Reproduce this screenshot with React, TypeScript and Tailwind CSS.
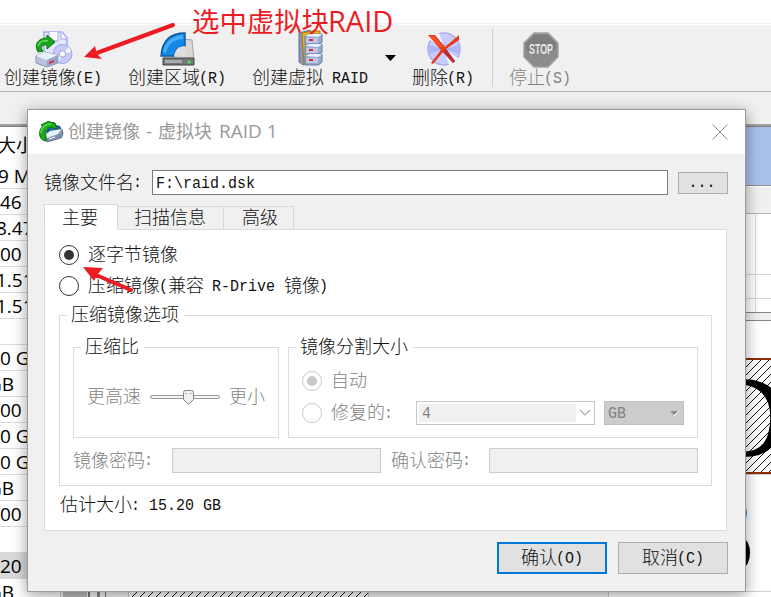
import type { ReactNode } from 'react';
import { clsx } from 'clsx';

const cjkFont = "font-['Noto_Sans_CJK_SC',sans-serif]";
const monoFont = "font-['Liberation_Mono','Noto_Sans_CJK_SC',monospace]";
const uiFont = "font-['Open_Sans','Noto_Sans_CJK_SC',sans-serif]";

/* Fixed-pitch label: Han characters take 18px, Latin ones 9px. */
function Label({ children, className }: { children: string; className?: string }) {
  const runs = children.split(/([\u4e00-\u9fff]+)/).filter(Boolean);
  return (
    <span className={clsx('inline-flex h-[18px] shrink-0 items-center whitespace-pre font-light', className)}>
      {runs.map((run, i) =>
        /[\u4e00-\u9fff]/.test(run) ? (
          <span key={i} className={clsx(cjkFont, '-mt-[4px] text-[18px] leading-[18px]')}>{run}</span>
        ) : (
          <span key={i} className={clsx(monoFont, '-ml-px mt-[3px] scale-y-115 text-[15px] leading-[18px] first:ml-0')}>{run}</span>
        ),
      )}
    </span>
  );
}

function CreateImageIcon() {
  return (
    <svg width="38" height="38" viewBox="0 0 38 38" className="block">
      <path d="M9 2h18l5 6v17H9z" fill="#e4e6ff" stroke="#aaa9f2" strokeWidth="1.6" />
      <path d="M14 2v9h9V2M26 2v7h6" fill="#fff" stroke="#b5b4f4" strokeWidth="1.3" />
      <circle cx="27.5" cy="24" r="9.5" fill="#c5cafa" stroke="#a3a2df" />
      <path d="M27 24 34 17a9 9 0 0 1 2 5zM27 24l-3 8a9 9 0 0 1-5-4z" fill="#effaff" />
      <circle cx="27.5" cy="24" r="3.2" fill="#fff" stroke="#9c9cd8" />
      <path d="m1 26 8-4 14 3v8l-11 4L1 33z" fill="#b9c3de" stroke="#8a96bb" />
      <path d="m1 26 8-4 14 3-11 5z" fill="#e8f0fa" />
      <path d="M12 30v7l11-4v-8z" fill="#97a5ce" />
      <path d="m14 32 5-2v2l-5 2z" fill="#e22c35" />
      <path d="M3 22C-2 13 5 8 12 8V5l8 7-8 7v-4c-5-1-7 3-4 6z" fill="#18a51d" stroke="#087b13" />
      <path d="M3 16c1-4 5-6 10-5" fill="none" stroke="#6bdc61" strokeWidth="1.5" />
    </svg>
  );
}

function CreateRegionIcon() {
  return (
    <svg width="36" height="36" viewBox="0 0 36 36" className="block">
      <path d="m24 7 8 1 2 20H4l2-6h18z" fill="#d8d8d8" stroke="#a7a7a7" />
      <path d="M3 26h31v7H3z" fill="#777" stroke="#444" />
      <path d="M5 28h17v3H5z" fill="#aaa" />
      <circle cx="29" cy="30" r="1.5" fill="#48f13c" />
      <path d="M1 24C2 10 9 1 25 1v13c-7 0-10 4-11 10z" fill="#1587e5" stroke="#1057a1" strokeWidth="1.4" />
      <path d="M3 20C5 10 11 4 23 3v4C14 7 8 12 6 21z" fill="#44aef8" />
      <path d="M14 24c1-6 4-10 11-10v10z" fill="#ddd" />
    </svg>
  );
}

function VirtualRaidIcon() {
  return (
    <svg width="28" height="37" viewBox="0 0 28 37" className="block">
      <path d="M2 3 13 0v32l-7 3-4-3z" fill="#8993bd" stroke="#69739c" />
      <path d="M5 3 16 1h7v33H7z" fill="#e9b71c" stroke="#a77d05" />
      {[4, 14, 24].map((y) => (
        <g key={y} transform={`translate(8 ${y})`}>
          <path d="m0 2 4-2h13v8l-4 3H0z" fill="#9da9d2" stroke="#6776a5" />
          <path d="m0 2 4-2h13l-4 3z" fill="#e8f2ff" />
          <path d="M1 4h12v5H1z" fill="#bbc8ea" />
          <path d="M4 5h4v2H4z" fill="#dd2631" />
        </g>
      ))}
    </svg>
  );
}

function DeleteIcon() {
  return (
    <svg width="36" height="36" viewBox="0 0 36 36" className="block">
      <circle cx="18" cy="18" r="16" fill="#c9ccfb" stroke="#aaaceb" strokeWidth="1.5" />
      <path d="M18 18 4 9a16 16 0 0 1 9-7zM18 18l14 9a16 16 0 0 1-9 7z" fill="#f5faff" />
      <path d="M18 18 33 14v9zM18 18 3 23v-9z" fill="#afb6f6" />
      <circle cx="18" cy="18" r="4" fill="#e8e9ff" stroke="#9798d6" />
      <path d="M2 4h7l10 12L33 4v5L20 18l9 12-2 2-10-11L7 33l-2-1 10-13z" fill="#e63918" />
      <path d="m3 5 5 0 9 11-3 0z" fill="#ff5429" />
      <path d="m20 18 9 12-2 2-10-11z" fill="#b92d38" />
    </svg>
  );
}

function StopIcon() {
  return (
    <svg width="36" height="36" viewBox="0 0 36 36" className="block">
      <path d="M11 1h14l10 10v14L25 35H11L1 25V11z" fill="#8b8b8b" stroke="#a3a3a3" strokeWidth="1.5" />
      <path d="M11 3h14l8 8v7H3v-7z" fill="#7d7d7d" />
      <text x="18" y="22" textAnchor="middle" textLength="24" lengthAdjust="spacingAndGlyphs" fontFamily="Liberation Sans, sans-serif" fontSize="14" fontWeight="700" fill="#e6e6e6">STOP</text>
    </svg>
  );
}

function DialogIcon() {
  return (
    <svg width="25" height="22" viewBox="0 0 25 22" className="block">
      <path d="m7 10 6-7 8 2 3 7-2 5H9z" fill="#124b91" />
      <path d="m10 8 5-4 6 3 1 5-12 2z" fill="#1c6cc3" />
      <path d="m6 14 5-4 12-2 1 5-2 4-14 4z" fill="#8495ac" stroke="#43546b" strokeWidth=".7" />
      <path d="m6 14 5-4 12-2-4 5-11 4z" fill="#e8f3fb" />
      <path d="m10 18 6-2" stroke="#fff" />
      <circle cx="20" cy="15" r="1" fill="#4d8de0" />
      <path d="M7 20C-1 19-1 9 4 5L2 4 9 .5l7 1.5 2 6-4-1c-5-2-9 3-7 8z" fill="#19a820" stroke="#06720d" />
      <path d="M2 12c0-5 4-9 10-9" fill="none" stroke="#63df43" strokeWidth="1.5" />
    </svg>
  );
}

function ToolButton({ icon, text, className, iconClass }: { icon: ReactNode; text: string; className?: string; iconClass?: string }) {
  return (
    <div className={clsx('flex shrink-0 flex-col items-start', className)}>
      <div className={clsx('flex h-[38px] items-start', iconClass)}>{icon}</div>
      <Label className="mt-px">{text}</Label>
    </div>
  );
}

function Radio({ checked, disabled }: { checked?: boolean; disabled?: boolean }) {
  return (
    <span className={clsx('flex size-5 shrink-0 items-center justify-center rounded-full border bg-white', disabled ? 'border-[#c8c8c8]' : 'border-[#333]')}>
      {checked && <span className={clsx('size-[10px] rounded-full', disabled ? 'bg-[#c8c8c8]' : 'bg-[#333]')} />}
    </span>
  );
}

function Group({ title, className, children }: { title: string; className?: string; children: ReactNode }) {
  return (
    <fieldset className={clsx('min-w-0 shrink-0 border border-[#dcdcdc]', className)}>
      <legend className="ml-[7px] flex h-[18px] pl-1 pr-[5px]">
        <Label>{title}</Label>
      </legend>
      {children}
    </fieldset>
  );
}

const sizes = [
  { text: '9 M', shift: '-ml-[2px]' },
  { text: '46 G', shift: 'ml-0' },
  { text: '8.47', shift: '-ml-[4px]' },
  { text: '00 G', shift: 'ml-0' },
  { text: '1.51', shift: '-ml-[4px]' },
  { text: '1.51', shift: '-ml-[4px]' },
  { text: '', shift: '' },
  { text: '0 G', shift: 'ml-0' },
  { text: 'GB', shift: '-ml-[12px]' },
  { text: '00 G', shift: 'ml-0' },
  { text: '0 G', shift: 'ml-0' },
  { text: '0 G', shift: 'ml-0' },
  { text: 'GB', shift: '-ml-[12px]' },
  { text: '00 G', shift: 'ml-0' },
  { text: '', shift: '' },
  { text: '20 G', shift: 'ml-0', selected: true },
  { text: 'GB', shift: '-ml-[12px]' },
];

function SizeColumn() {
  return (
    <div className={clsx(uiFont, 'flex w-[61px] shrink-0 flex-col overflow-hidden border-r border-[#d0d0d0] bg-white text-[19px] text-black')}>
      <div className="-ml-[2px] flex h-[36px] shrink-0 items-center whitespace-nowrap text-[18px]">大小</div>
      {sizes.map((row, i) => (
        <div key={i} className={clsx('flex h-[26px] shrink-0 items-center border-b border-[#dcdcdc] leading-[24px] whitespace-nowrap', row.selected && 'bg-[#d9d9d9]')}>
          <span className={row.shift}>{row.text}</span>
        </div>
      ))}
    </div>
  );
}

const hatch = 'bg-[repeating-linear-gradient(135deg,#111_0px,#111_1px,#fff_1px,#fff_5.66px)]';

function MapColumn() {
  return (
    <div className="flex w-[163px] shrink-0 flex-col bg-white">
      <div className="h-[58px] bg-[#a9c0ea]" />
      <div className="h-px bg-[#8f8f8f]" />
      <div className="h-px bg-white" />
      <div className="h-[26px] bg-[#f0f0f0]" />
      <div className="h-px bg-[#b4b4b4]" />
      <div className="flex h-[98px]">
        <div className="flex w-[148px] flex-col border-r border-[#d8d8d8]">
          <div className="h-[61px] border-b border-[#d8d8d8]" />
          <div className="h-6 border-b border-[#d8d8d8]" />
        </div>
        <div className="flex flex-1 flex-col">
          <div className="h-[61px] border-b border-[#d8d8d8]" />
          <div className="h-6 border-b border-[#d8d8d8]" />
        </div>
      </div>
      <div className="h-[9px] border-y border-[#85858d] bg-[#f0f0f0]" />
      <div className="h-[37px]" />
      <div className={clsx('flex h-[116px] justify-end overflow-hidden border-y-2 border-[#8b2e05]', hatch)}>
        <span className="-mr-[16px] mt-[16px] font-['Liberation_Serif',serif] text-[118px] leading-[84px] text-black">D</span>
      </div>
      <div className="h-px bg-[#cfcfcf]" />
      <svg width="163" height="116" className="block shrink-0">
        <ellipse cx="134" cy="38" rx="5" ry="9" fill="#268fe2" />
        <ellipse cx="135" cy="78" rx="7" ry="14" fill="#000" />
      </svg>
      <div className="h-px bg-[#d0d0d0]" />
      <div className="h-[5px] border-l border-[#ccc]" />
    </div>
  );
}

function DiskBase() {
  return (
    <div className="flex flex-1 flex-col justify-end bg-[#f5f5f5]">
      <div className="flex h-[6px]">
        <div className="ml-[2px] w-[24px] bg-[#bdbdbd]" />
        <div className="ml-px w-[2px] bg-[#777]" />
        <div className="ml-[7px] w-[3px] bg-[#888]" />
        <div className="ml-[5px] w-px bg-[#777]" />
        <div className={clsx('ml-[22px] w-[241px] border-x border-[#ccc]', hatch)} />
      </div>
    </div>
  );
}

function Arrow({ className, width, height, line, head }: { className: string; width: number; height: number; line: string; head: string }) {
  return (
    <svg width={width} height={height} className={clsx('pointer-events-none absolute', className)}>
      <path d={line} stroke="#ed1c24" strokeWidth="4" strokeLinecap="round" fill="none" />
      <path d={head} fill="#ed1c24" />
    </svg>
  );
}

function ImageDialog() {
  return (
    <div className="absolute left-[27px] top-[109px] flex h-[483px] w-[719px] flex-col border border-[#9b9b9b] bg-[#f0f0f0] shadow-[0_3px_14px_rgba(0,0,0,0.4)]">
      <div className="flex h-11 shrink-0 items-center bg-white pl-[11px]">
        <DialogIcon />
        <span className={clsx(uiFont, 'ml-1 -mt-[2px] flex items-baseline whitespace-pre text-[19px] leading-none text-[#999]')}>
          <span className="text-[18px]">创建镜像</span>
          <span className="w-[18px] text-center"> - </span>
          <span className="text-[18px]">虚拟块</span>
          <span className="ml-[2px]"> RAID 1</span>
        </span>
        <svg width="16" height="16" className="ml-auto mr-[17px]">
          <path d="m.5.5 15 15m0-15-15 15" stroke="#8c8c8c" fill="none" />
        </svg>
      </div>
      <div className="flex flex-1 flex-col pl-4 pt-4">
        <div className="flex h-[25px] items-center">
          <Label className="w-[108px]">镜像文件名:</Label>
          <div className="flex h-[25px] w-[516px] items-center border border-[#7a7a7a] bg-white pl-[3px] pt-px">
            <Label>F:\raid.dsk</Label>
          </div>
          <div className="ml-[10px] flex h-[22px] w-[50px] items-center justify-center border border-[#adadad] bg-[#e1e1e1] pr-[2px]">
            <Label>...</Label>
          </div>
        </div>
        <div className="mt-[9px] flex h-[25px] items-end">
          <div className="-mb-px flex h-[26px] w-[74px] items-center border-x border-t border-[#d9d9d9] bg-white pl-[17px]">
            <Label>主要</Label>
          </div>
          <div className="flex h-[23px] w-[106px] items-center border-r border-t border-[#d9d9d9] pl-4">
            <Label>扫描信息</Label>
          </div>
          <div className="flex h-[23px] w-[70px] items-center border-r border-t border-[#d9d9d9] pl-[18px]">
            <Label>高级</Label>
          </div>
        </div>
        <div className="flex h-[302px] w-[683px] shrink-0 flex-col border border-t-0 border-[#dcdcdc] bg-white">
          <div className="ml-[73px] h-px shrink-0 bg-[#dcdcdc]" />
          <div className="mt-[9px] flex h-[31px] items-center pl-[14px]">
            <Radio checked />
            <Label className="ml-[9px]">逐字节镜像</Label>
          </div>
          <div className="flex h-[32px] items-center pl-[14px]">
            <Radio />
            <Label className="ml-[9px]">压缩镜像(兼容 R-Drive 镜像)</Label>
          </div>
          <Group title="压缩镜像选项" className="ml-[14px] mt-[4px] h-[180px] w-[653px]">
            <div className="ml-[13px] mt-[14px] flex gap-[9px]">
              <Group title="压缩比" className="h-[100px] w-[206px]">
                <div className="mt-[31px] flex h-5 items-center pl-[13px] text-[#838383]">
                  <Label>更高速</Label>
                  <svg width="70" height="18" className="ml-[9px]">
                    <rect x=".5" y="7.5" width="69" height="3" rx="1.5" fill="#f5f5f5" stroke="#999" />
                    <path d="M33.5 4.5q0-2 2-2h6q2 0 2 2v7l-5 5-5-5z" fill="#f0f0f0" stroke="#858585" />
                    <path d="M35 5.5h2m3 0h2" stroke="#aaa" />
                  </svg>
                  <Label className="ml-[9px]">更小</Label>
                </div>
              </Group>
              <Group title="镜像分割大小" className="h-[100px] w-[410px]">
                <div className="mt-[15px] flex h-5 items-center pl-[13px] text-[#838383]">
                  <Radio checked disabled />
                  <Label className="ml-[9px]">自动</Label>
                </div>
                <div className="mt-[10px] flex h-6 items-center pl-[13px] text-[#838383]">
                  <Radio disabled />
                  <Label className="ml-[9px] w-[85px]">修复的:</Label>
                  <div className="flex h-6 w-[179px] items-center border border-[#c5c5c5] bg-white pl-[2px]">
                    <div className="flex h-[18px] w-[157px] items-center bg-[#f0f0f0] pl-[3px]">
                      <Label className="mt-px">4</Label>
                    </div>
                    <svg width="12" height="8" className="ml-[3px]">
                      <path d="m1 1 5 5 5-5" fill="none" stroke="#ababab" strokeWidth="1.2" />
                    </svg>
                  </div>
                  <div className="ml-[9px] flex h-6 w-20 items-center border border-[#bfbfbf] bg-[#ccc] pl-[3px]">
                    <Label>GB</Label>
                    <svg width="9" height="6" className="ml-auto mr-[4px]">
                      <path d="m4 6 5-5" stroke="#fff" />
                      <path d="M0 1h8L4 5z" fill="#8f8f8f" />
                    </svg>
                  </div>
                </div>
              </Group>
            </div>
            <div className="ml-[13px] mt-[10px] flex h-[25px] items-center text-[#838383]">
              <Label className="w-[99px]">镜像密码:</Label>
              <div className="h-[25px] w-[209px] border border-[#ccc] bg-[#f0f0f0]" />
              <Label className="ml-[10px] w-[98px]">确认密码:</Label>
              <div className="h-[25px] w-[209px] border border-[#ccc] bg-[#f0f0f0]" />
            </div>
          </Group>
          <div className="ml-[15px] mt-[9px] flex h-5 items-center">
            <Label>估计大小: 15.20 GB</Label>
          </div>
        </div>
        <div className="ml-[453px] mt-[11px] flex gap-[11px]">
          <div className="flex h-8 w-[110px] items-center justify-center border-2 border-[#0078d7] bg-[#e1e1e1]">
            <Label>确认(O)</Label>
          </div>
          <div className="flex h-8 w-[110px] items-center justify-center border border-[#adadad] bg-[#e1e1e1]">
            <Label>取消(C)</Label>
          </div>
        </div>
      </div>
    </div>
  );
}

export default function App() {
  return (
    <div className="relative flex h-[597px] w-[771px] flex-col overflow-hidden bg-white text-[#111]">
      <div className="h-6 shrink-0 border-b border-[#f0f0f0]" />
      <div className="mt-px flex h-[67px] shrink-0 border-b border-[#b4b4b4] bg-[#f0f0f0] pl-1 pt-[4px]">
        <ToolButton icon={<CreateImageIcon />} text="创建镜像(E)" className="w-[124px]" iconClass="ml-[31px] mt-px" />
        <ToolButton icon={<CreateRegionIcon />} text="创建区域(R)" className="w-[124px]" iconClass="ml-[32px] mt-px pt-[2px]" />
        <ToolButton icon={<VirtualRaidIcon />} text="创建虚拟 RAID" className="w-[133px]" iconClass="ml-[45px] mt-px" />
        <svg width="12" height="7" className="mt-[26px] shrink-0">
          <path d="M0 0h11L5.5 6z" fill="#000" />
        </svg>
        <ToolButton icon={<DeleteIcon />} text="删除(R)" className="ml-[15px] w-[80px]" iconClass="ml-[14px] mt-px pt-px" />
        <div className="h-[58px] w-px shrink-0 bg-[#cfcfcf]" />
        <ToolButton icon={<StopIcon />} text="停止(S)" className="ml-[16px] text-[#838383]" iconClass="ml-[14px] mt-px pt-[2px]" />
      </div>
      <div className="h-8 shrink-0 bg-[#f0f0f0]" />
      <div className="h-[3px] shrink-0 border-b border-[#808080] bg-[#a0a0a0]" />
      <div className="flex h-[470px] shrink-0">
        <SizeColumn />
        <DiskBase />
        <MapColumn />
      </div>
      <ImageDialog />
      <span className={clsx(uiFont, 'absolute left-[192px] top-px flex items-baseline whitespace-nowrap text-[27.4px] leading-[40px] text-[#ed1c24]')}>
        选中虚拟块<span className="-ml-px text-[29px]">RAID</span>
      </span>
      <Arrow className="left-[82px] top-[20px]" width={96} height={42} line="M91 5 12 34" head="M2 37 13 26 15 34 20 39z" />
      <Arrow className="left-[82px] top-[264px]" width={56} height={30} line="M49 26 14 11" head="M1 3 21 4 15 11 12 17z" />
    </div>
  );
}
